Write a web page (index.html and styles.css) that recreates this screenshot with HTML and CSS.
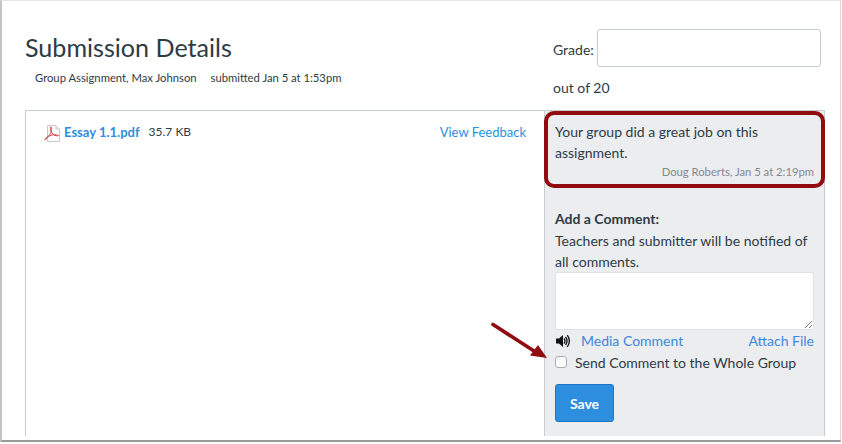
FILE: index.html
```html
<!DOCTYPE html>
<html lang="en">
<head>
<meta charset="utf-8">
<title>Submission Details</title>
<link rel="stylesheet" href="styles.css">
</head>
<body>
<div class="window">
  <header class="head">
    <div class="head-left">
      <h1 class="title">Submission Details</h1>
      <div class="meta"><span>Group Assignment, Max Johnson</span><span>submitted Jan 5 at 1:53pm</span></div>
    </div>
    <div class="grade">
      <div class="grade-row"><label class="grade-label">Grade:</label><div class="grade-input"></div></div>
      <div class="out-of">out of 20</div>
    </div>
  </header>
  <main class="panel">
    <section class="file-pane">
      <div class="file-info">
        <svg class="pdf" width="17" height="17" viewBox="0 0 17 17" aria-hidden="true">
          <path d="M3.5 .5H12L15.5 4V16.5H3.5Z" fill="#fff" stroke="#c9c9c9"/>
          <path d="M12 .5V4H15.5" fill="#eee" stroke="#c9c9c9"/>
          <path d="M.8 14.8C3 13.5 5.5 10.5 6.8 7.5 7.4 5.5 7.4 3.8 7 1.8 6.2 3 6.6 5.5 8 8 9.5 10.2 11.5 11.2 14.5 10.6 12 9.2 8 9.3 4 11.5 2.5 12.4 1.2 13.6.8 14.8Z" fill="none" stroke="#d0483f" stroke-width="1"/>
        </svg>
        <a class="file-name">Essay 1.1.pdf</a><span class="file-size">35.7 KB</span>
      </div>
      <a class="feedback">View Feedback</a>
    </section>
    <aside class="side">
      <div class="comment">
        <p class="comment-text">Your group did a great job on this assignment.</p>
        <div class="comment-by">Doug Roberts, Jan 5 at 2:19pm</div>
      </div>
      <h2 class="add-title">Add a Comment:</h2>
      <p class="add-note">Teachers and submitter will be notified of all comments.</p>
      <div class="textarea">
        <svg class="grip" width="9" height="9" viewBox="0 0 9 9" aria-hidden="true"><path d="M1 8 8 1M5 8 8 5" stroke="#777" fill="none"/></svg>
      </div>
      <div class="links">
        <svg class="speaker" width="15" height="14" viewBox="0 0 15 14" aria-hidden="true">
          <path d="M0 4.5H3L7 1V13L3 9.5H0Z" fill="#111"/>
          <path d="M8 4.5C9.2 6 9.2 8 8 9.5M9.6 3C11.4 5.5 11.4 8.5 9.6 11M11.3 1.2C14 5 14 9 11.3 12.8" fill="none" stroke="#111" stroke-width="1.3"/>
        </svg>
        <a class="media">Media Comment</a>
        <a class="attach">Attach File</a>
      </div>
      <label class="check-row"><span class="check"></span><span>Send Comment to the Whole Group</span></label>
      <button class="save" type="button">Save</button>
    </aside>
  </main>
  <div class="highlight"></div>
  <svg class="arrow" width="62" height="44" viewBox="0 0 62 44" aria-hidden="true">
    <path d="M3 2.5 44 29" stroke="#900c10" stroke-width="3.6" stroke-linecap="round" fill="none"/>
    <path d="M57 36 40 33.5 48 23Z" fill="#900c10"/>
  </svg>
</div>
</body>
</html>
```
FILE: styles.css
```css
* { box-sizing: border-box; }
html, body { margin: 0; padding: 0; background: #fff; }
body {
  width: 842px;
  height: 444px;
  overflow: hidden;
  font-family: Lato, "Open Sans", sans-serif;
  color: #2d3b45;
}
a { color: #2d8ee0; }
.window {
  position: relative;
  width: 841px;
  height: 442px;
  border-top: 1px solid #e4e4e4;
  border-left: 2px solid #c4c4c4;
  border-right: 1px solid #d8d8d8;
  border-bottom: 2px solid #9a9a9a;
  padding: 0 15px 4px 23px;
  display: flex;
  flex-direction: column;
  overflow: hidden;
}
.head {
  height: 109px;
  display: flex;
  justify-content: space-between;
  flex: none;
}
.head-left { padding-top: 30px; }
.title {
  margin: 0;
  font-size: 25.1px;
  line-height: 32px;
  font-weight: 400;
}
.meta {
  margin-top: 7px;
  padding-left: 10px;
  font-size: 11.25px;
  line-height: 16px;
  display: flex;
  gap: 14px;
}
.grade {
  width: 268px;
  padding-top: 28px;
  font-size: 14px;
  margin-right: 4px;
}
.grade-row { display: flex; align-items: center; gap: 3px; }
.grade-label { padding-top: 3px; line-height: 20px; }
.grade-input {
  width: 224px;
  height: 38px;
  background: #fff;
  border: 1px solid #c7cdd1;
  border-radius: 3px;
}
.out-of { margin-top: 11px; line-height: 20px; }
.panel {
  flex: 1;
  display: flex;
  border: 1px solid #c7cdd1;
  border-bottom: 0;
  border-right: 0;
  min-height: 0;
}
.file-pane {
  flex: 1;
  display: flex;
  justify-content: space-between;
  padding: 11px 18px 0 18px;
  font-size: 13px;
  line-height: 20px;
}
.file-info { display: flex; align-items: flex-start; }
.pdf { margin-top: 3px; margin-right: 3px; flex: none; }
.file-name { font-weight: 700; margin-right: 9px; }
.file-size { font-size: 12px; }
.side {
  width: 281px;
  flex: none;
  background: #ebedef;
  border-left: 1px solid #c7cdd1;
  border-right: 1px solid #c7cdd1;
  padding: 0 10px;
  font-size: 14px;
}
.comment {
  margin: 0 -8px 0 -8px;
  height: 76px;
  padding: 10px 8px 0;
}
.comment-text { margin: 0; line-height: 21px; }
.comment-by {
  font-size: 11.25px;
  line-height: 16px;
  text-align: right;
  color: #85898d;
  margin-top: 1px;
}
.add-title {
  margin: 22px 0 0;
  font-size: 14px;
  line-height: 20px;
  font-weight: 700;
}
.add-note { margin: 1px 0 0; line-height: 21px; }
.textarea {
  position: relative;
  height: 58px;
  margin-top: 0;
  background: #fff;
  border: 1px solid #dfe2e5;
  border-radius: 3px;
}
.grip { position: absolute; right: 0; bottom: 0; }
.links {
  display: flex;
  align-items: center;
  height: 21px;
  margin-top: 0;
}
.speaker { flex: none; margin-left: 1px; margin-right: 10px; }
.links a { color: #3f86e0; }
.attach { margin-left: auto; }
.check-row {
  display: flex;
  align-items: center;
  height: 22px;
  margin-top: 0;
}
.check {
  width: 12px;
  height: 12px;
  margin-right: 8px;
  background: #fff;
  border: 1px solid #a9adb0;
  border-radius: 3px;
  flex: none;
}
.save {
  display: block;
  margin-top: 11px;
  width: 59px;
  height: 38px;
  background: #2d8ee0;
  color: #fff;
  border: 1px solid #1d76c2;
  border-radius: 3px;
  font: 700 14px Lato, sans-serif;
}
.highlight {
  position: absolute;
  left: 542px;
  top: 110px;
  width: 281px;
  height: 77px;
  border: 4px solid #900c10;
  border-radius: 10px;
}
.arrow {
  position: absolute;
  left: 488px;
  top: 321px;
}
```
